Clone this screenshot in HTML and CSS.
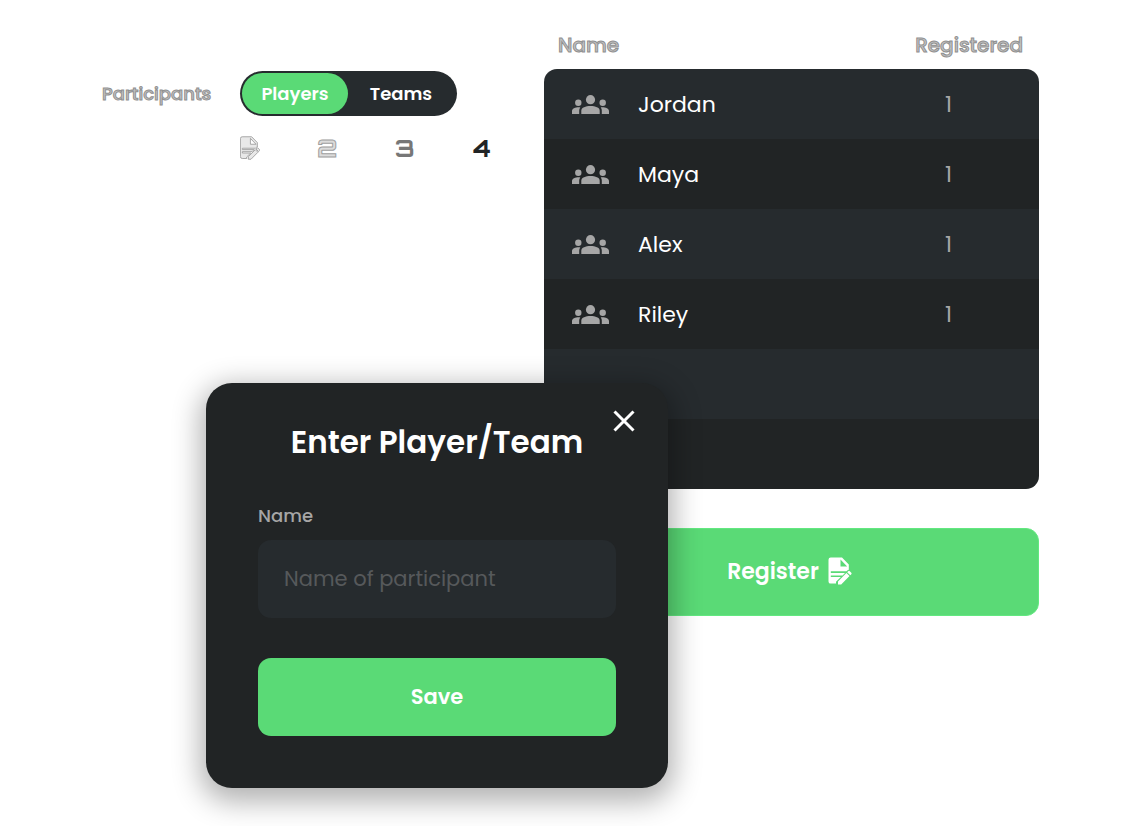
FILE: index.html
```html
<!DOCTYPE html>
<html lang="en">
<head>
  <meta charset="UTF-8" />
  <meta name="viewport" content="width=device-width, initial-scale=1.0" />
  <title>Participants</title>
  <link rel="stylesheet" href="styles.css">
</head>
<body>
  <!-- shared icons -->
  <svg class="sprite" aria-hidden="true">
    <symbol id="icon-group" viewBox="0 0 37 19">
      <circle cx="18.500" cy="4.700" r="4.600" />
      <circle cx="6.300" cy="7.800" r="3.200" />
      <circle cx="30.700" cy="7.800" r="3.200" />
      <path d="M9.300 19v-3.200c0-3.200 4.300-4.700 9.200-4.700s9.200 1.500 9.200 4.700V19z" />
      <path d="M0 19v-2.700c0-2.900 3.700-4.200 8.300-3.900-.8 1-1.100 2.100-1.100 3.400V19z" />
      <path d="M37 19v-2.700c0-2.900-3.700-4.200-8.300-3.900.8 1 1.100 2.100 1.100 3.400V19z" />
    </symbol>
    <symbol id="icon-register" viewBox="0 0 24 28">
      <path d="M2.700 0.500H14L20.800 7.500V12.800Q19.500 13.200 18.500 14.300H2.800V15.900H17L14.500 18.400H2.800V20H12.900L8 24.800V26.600H2.700A2.200 2.200 0 0 1 .5 24.400V2.700A2.200 2.200 0 0 1 2.700 .5zM12.500 2.500V9.500H19.200z" fill-rule="evenodd" />
      <path d="M10 27.500V24.400L18.400 16L21.500 19.100L13.200 27.500zM19.200 15.200L20.200 14.200Q21 13.500 21.800 14.200L23.300 15.700Q24 16.500 23.300 17.300L22.300 18.300z" />
    </symbol>
  </svg>

  <main class="page">
    <section class="setup">
      <span class="setup-label" id="typeLabel">Participants</span>
      <div class="toggle" role="radiogroup" aria-labelledby="typeLabel">
        <input type="radio" name="type" id="players" checked>
        <label for="players">Players</label>
        <input type="radio" name="type" id="teams">
        <label for="teams">Teams</label>
      </div>
      <ol class="steps">
        <li class="step step-icon"><svg><use href="#icon-register" /></svg></li>
        <li class="step step-two">2</li>
        <li class="step step-three">3</li>
        <li class="step step-four">4</li>
      </ol>
    </section>

    <section class="registration">
      <table class="roster">
        <thead>
          <tr>
            <th>Name</th>
            <th class="count">Registered</th>
          </tr>
        </thead>
        <tbody>
          <tr>
            <td><div class="person"><svg><use href="#icon-group" /></svg>Jordan</div></td>
            <td class="count">1</td>
          </tr>
          <tr>
            <td><div class="person"><svg><use href="#icon-group" /></svg>Maya</div></td>
            <td class="count">1</td>
          </tr>
          <tr>
            <td><div class="person"><svg><use href="#icon-group" /></svg>Alex</div></td>
            <td class="count">1</td>
          </tr>
          <tr>
            <td><div class="person"><svg><use href="#icon-group" /></svg>Riley</div></td>
            <td class="count">1</td>
          </tr>
          <tr><td></td><td></td></tr>
          <tr><td></td><td></td></tr>
        </tbody>
      </table>
      <button type="button" class="btn btn-register">
        Register
        <svg><use href="#icon-register" /></svg>
      </button>
    </section>

    <dialog class="modal" open aria-labelledby="modalTitle">
      <button type="button" class="modal-close" aria-label="Close">
        <svg viewBox="0 0 22 22"><path d="M1.500 1.500l19 19M20.500 1.500l-19 19" /></svg>
      </button>
      <h2 id="modalTitle">Enter Player/Team</h2>
      <form>
        <label for="participantName">Name</label>
        <input type="text" id="participantName" placeholder="Name of participant">
        <button type="button" class="btn">Save</button>
      </form>
    </dialog>
  </main>
</body>
</html>
```

FILE: styles.css
```css
* {
  box-sizing: border-box;
}

body {
  margin: 0;
  background: #fff;
  color: #fff;
  font-family: Poppins, Inter, "Liberation Sans", sans-serif;
}

button, input {
  font-family: inherit;
}

.sprite {
  position: absolute;
  width: 0;
  height: 0;
}

.page {
  position: relative;
  display: grid;
  grid-template-columns: 26fr 33fr;
  gap: 52px;
  min-height: 100vh;
  padding: 20px 89px 38px 102px;
}

/* participant type and steps */
.setup {
  display: grid;
  grid-template-columns: 138px 1fr;
  align-content: start;
  align-items: center;
  row-gap: 18px;
  padding-top: 51px;
}

.setup-label, .roster th {
  color: #c4c4c4;
  font-size: 18px;
  font-weight: 500;
  -webkit-text-stroke: 1px #909090;
}

.toggle {
  display: flex;
  justify-self: start;
  height: 45px;
  padding: 2px 3px 2px 2px;
  border-radius: 24px;
  background: #262b2e;
}

.toggle input {
  position: absolute;
  opacity: 0;
}

.toggle label {
  width: 106px;
  border-radius: 24px;
  font-size: 18px;
  font-weight: 600;
  line-height: 41px;
  text-align: center;
  cursor: pointer;
}

.toggle input:checked + label {
  background: #5ada76;
}

.steps {
  grid-column: 2;
  display: flex;
  justify-content: space-between;
  align-items: center;
  margin: 0;
  padding: 0;
  list-style: none;
}

.step {
  display: flex;
  justify-content: center;
  width: 20px;
  font-family: Orbitron, "DejaVu Sans", sans-serif;
  font-size: 24px;
  font-weight: 700;
  line-height: 28px;
}

.step svg {
  display: block;
  width: 20px;
  height: 24px;
  overflow: visible;
  fill: #e8e8e8;
  stroke: #999;
}

.step-two {
  color: #dcdcdc;
  -webkit-text-stroke: 1px #a0a0a0;
}

.step-three {
  color: #777;
}

.step-four {
  color: #212425;
}

/* roster */
.roster {
  width: 100%;
  border-spacing: 0;
}

.roster th {
  height: 49px;
  padding: 0 14px;
  font-size: 20px;
  text-align: left;
}

.roster th.count {
  padding-right: 16px;
  text-align: right;
}

.roster td {
  height: 70px;
  padding: 0 28px;
  background: #212425;
  font-size: 22px;
}

.roster tr:nth-child(odd) td {
  background: #262b2e;
}

.roster td.count {
  padding-right: 87px;
  color: #a6a6a6;
  text-align: right;
}

.roster tbody tr:first-child td:first-child {
  border-top-left-radius: 13px;
}

.roster tbody tr:first-child td:last-child {
  border-top-right-radius: 13px;
}

.roster tbody tr:last-child td:first-child {
  border-bottom-left-radius: 13px;
}

.roster tbody tr:last-child td:last-child {
  border-bottom-right-radius: 13px;
}

.person {
  display: flex;
  align-items: center;
  gap: 29px;
}

.person svg {
  width: 37px;
  height: 19px;
  fill: #a6a6a6;
}

.btn {
  display: flex;
  justify-content: center;
  align-items: center;
  width: 100%;
  height: 78px;
  padding: 0 0 2px;
  border: none;
  border-radius: 13px;
  background: #5ada76;
  color: #fff;
  font-size: 21px;
  font-weight: 600;
  cursor: pointer;
}

.btn-register {
  gap: 9px;
  height: 88px;
  margin-top: 39px;
  padding-right: 4px;
  border: 1px solid #62e880;
  font-size: 22px;
}

.btn-register svg {
  width: 24px;
  height: 28px;
  fill: #fff;
}

/* modal */
.modal {
  position: absolute;
  top: 383px;
  left: 206px;
  width: 462px;
  max-width: 100%;
  margin: 0;
  padding: 34px 52px 52px;
  border: none;
  border-radius: 26px;
  background: #212425;
  color: #fff;
  box-shadow: 0 8px 28px 6px rgba(0, 0, 0, 0.3);
}

.modal h2 {
  margin: 0 0 36px;
  font-size: 31px;
  font-weight: 600;
  line-height: 50px;
  text-align: center;
  white-space: nowrap;
}

.modal-close {
  position: absolute;
  top: 27px;
  right: 33px;
  width: 22px;
  height: 22px;
  padding: 0;
  border: none;
  background: none;
  cursor: pointer;
}

.modal-close svg {
  display: block;
  fill: none;
  stroke: #fff;
  stroke-width: 3;
}

.modal label {
  display: block;
  margin-bottom: 11px;
  color: #a6a6a6;
  font-size: 18px;
  font-weight: 500;
  line-height: 26px;
}

.modal input {
  display: block;
  width: 100%;
  height: 78px;
  margin-bottom: 40px;
  padding: 0 26px 2px;
  border: none;
  border-radius: 13px;
  background: #262b2e;
  color: #fff;
  font-size: 21px;
}

.modal input::placeholder {
  color: #56595b;
}
```
